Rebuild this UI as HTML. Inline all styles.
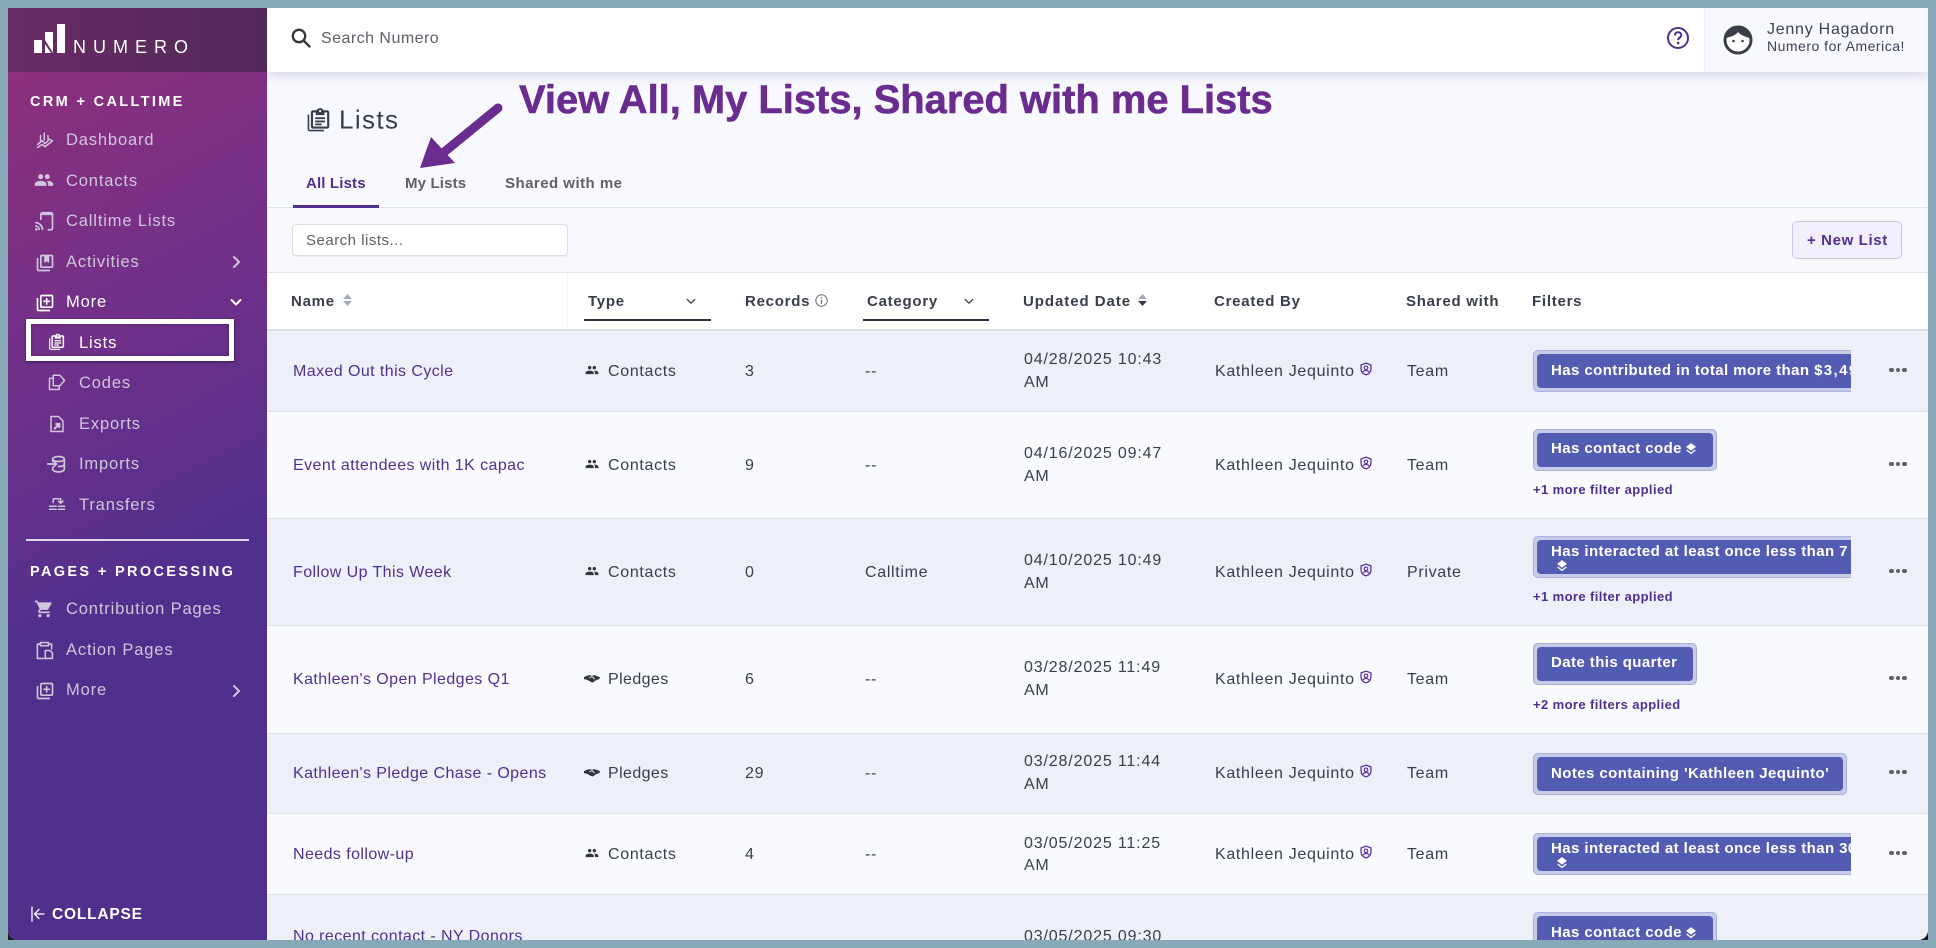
<!DOCTYPE html>
<html lang="en"><head><meta charset="utf-8"><title>Numero Lists</title>
<style>
*{box-sizing:border-box;margin:0;padding:0}
html,body{width:1936px;height:948px;overflow:hidden;background:#87a9b8;font-family:"Liberation Sans",sans-serif}
#cl,#cr{position:absolute;top:928px;width:12px;height:12px;background:#1a1a1a}
#cl{left:8px}#cr{left:1916px}
#app{position:absolute;left:8px;top:8px;width:1920px;height:932px;overflow:hidden;background:#f8f9fe;border-radius:0 0 10px 10px}
.a{position:absolute;white-space:nowrap}
.t{position:absolute;white-space:nowrap;line-height:20px;height:20px;margin-top:1.5px}
svg{position:absolute;display:block}
#side{position:absolute;left:0;top:0;width:259px;height:932px;background:linear-gradient(152deg,#94307a 0,#70308a 35%,#50308d 62%,#50308d 100%)}
#logo{position:absolute;left:0;top:0;width:259px;height:64px;background:linear-gradient(90deg,#682c63,#53295a)}
.n{font-size:16.5px;letter-spacing:.85px;color:#cfc6dc;margin-top:1px}
.sec{font-size:14.5px;font-weight:bold;letter-spacing:2.35px;color:#fff;margin-top:1px}
.ic{color:#cfc6dc;fill:currentColor}
.st{fill:none;stroke:currentColor;stroke-width:2;stroke-linecap:round;stroke-linejoin:round}
.row{position:absolute;left:259px;width:1661px}
.o{background:#edf0f8;border-bottom:1px solid #dfe3ec}
.e{background:#f9fafe;border-bottom:1px solid #dfe3ec}
.th{font-size:15px;font-weight:bold;letter-spacing:.75px;color:#3a3d4b}
.td{font-size:16px;letter-spacing:.68px;color:#3a3d4b}
.dt{letter-spacing:.85px}
.pl{letter-spacing:.4px}
.lk{font-size:16px;letter-spacing:.42px;color:#50308d}
.clip{position:absolute;left:1525px;overflow:hidden;height:42px}
.chip{position:absolute;left:0;top:0;height:42px;background:#c8cce8;border:1px solid #a9aedd;border-radius:5px}
.chip i{position:absolute;left:3px;top:3px;bottom:3px;right:3px;background:#535cb2;border-radius:4px}
.cht{position:absolute;white-space:nowrap;left:18px;line-height:18px;font-size:15px;font-weight:bold;letter-spacing:.42px;color:#fff;margin-top:1.5px}
.more{font-size:13px;font-weight:bold;letter-spacing:.4px;color:#50308d}
.dots{position:absolute;left:1881px;width:18px;height:4px}
.dots b{position:absolute;top:-.5px;width:4.5px;height:4.5px;border-radius:50%;background:#5f6068}
.dots b:nth-child(1){left:0}.dots b:nth-child(2){left:6.5px}.dots b:nth-child(3){left:13px}
</style></head><body>
<div id="cl"></div><div id="cr"></div>
<svg width="0" height="0" style="position:absolute"><defs>
<symbol id="people" viewBox="0 0 24 24"><path d="M16 11c1.66 0 2.99-1.34 2.99-3S17.66 5 16 5c-1.66 0-3 1.34-3 3s1.34 3 3 3zm-8 0c1.66 0 2.99-1.34 2.99-3S9.66 5 8 5C6.34 5 5 6.34 5 8s1.34 3 3 3zm0 2c-2.33 0-7 1.17-7 3.5V19h14v-2.5c0-2.33-4.67-3.5-7-3.5zm8 0c-.29 0-.62.02-.97.05 1.16.84 1.97 1.97 1.97 3.45V19h6v-2.5c0-2.33-4.67-3.5-7-3.5z"/></symbol>
<symbol id="libadd" viewBox="0 0 24 24"><path d="M4 6H2v14c0 1.1.9 2 2 2h14v-2H4V6zm16-4H8c-1.1 0-2 .9-2 2v12c0 1.1.9 2 2 2h12c1.1 0 2-.9 2-2V4c0-1.1-.9-2-2-2zm0 14H8V4h12v12zm-7-2h2v-3h3V9h-3V6h-2v3h-3v2h3z"/></symbol>
<symbol id="libbook" viewBox="0 0 24 24"><path d="M4 6H2v14c0 1.1.9 2 2 2h14v-2H4V6zm16-4H8c-1.1 0-2 .9-2 2v12c0 1.1.9 2 2 2h12c1.1 0 2-.9 2-2V4c0-1.1-.9-2-2-2zm0 14H8V4h3v8l3-2 3 2V4h3v12z"/></symbol>
<symbol id="lists" viewBox="0 0 24 24"><path d="M3 7H1.5v13.5c0 1.1.9 2 2 2h13V21H3V7z"/><path fill-rule="evenodd" d="M19.5 3H16c-.4-1.2-1.6-2-3-2s-2.600.8-3 2H6.500c-1.100 0-2 .9-2 2v13c0 1.100.9 2 2 2h13c1.100 0 2-.9 2-2V5c0-1.100-.9-2-2-2zM13 2.800a1 1 0 1 1 0 2 1 1 0 0 1 0-2zM19.500 18h-13V5H9v2.500h8V5h2.500v13z"/><path d="M8.500 9.500h9v1.700h-9zM8.500 12.500h9v1.700h-9zM8.500 15.200h6v1.600h-6z"/></symbol>
<symbol id="hands" viewBox="0 0 24 16"><path d="M0 6l4-2 4-1 4 1 3-1 4 1 5 2-1 3-4 1-6 4-3-1-5-3-5-1z"/><path d="M8 7l4-2 4 4" fill="none" stroke="#fff" stroke-width="1.300"/></symbol>
<symbol id="shield" viewBox="0 0 24 24"><path fill="none" stroke="#5a2f9e" stroke-width="2.200" d="M12 2l8.500 3v7c0 5-3.600 8.600-8.500 10-4.900-1.400-8.500-5-8.500-10V5z"/><circle cx="12" cy="10" r="3" fill="none" stroke="#5a2f9e" stroke-width="2"/><path fill="none" stroke="#5a2f9e" stroke-width="2" d="M6.500 17.500c1.500-2 3.500-3 5.500-3s4 1 5.500 3"/></symbol>
<symbol id="layers" viewBox="0 0 12 14"><path fill="#fff" d="M6 0l6 4.500L6 9 0 4.500z"/><path fill="none" stroke="#fff" stroke-width="1.500" d="M.8 8.200L6 12.300l5.200-4.100"/></symbol>
</defs></svg>
<div id="app">
<div id="side">
<div id="logo">
<svg style="left:0;top:0" width="100" height="64" viewBox="0 0 100 64"><g fill="#fff"><rect x="26" y="32" width="8" height="13"/><path d="M37 24H45V45L37 32Z"/><path d="M37 36L43 45H37Z"/><rect x="49" y="16" width="8" height="29"/></g></svg>
<div class="t" style="left:65px;top:27px;font-size:18px;letter-spacing:7px;color:#fff">NUMERO</div>
</div>
<div class="t sec" style="left:22px;top:83px">CRM + CALLTIME</div>
<div class="t n" style="left:58px;top:121px">Dashboard</div>
<svg class="st" style="left:28px;top:123px;color:#cfc6dc" width="18" height="18" viewBox="0 0 24 24"><path d="M6 6v7M11 3v9M16 6v5M2 18l6-5 4 4 6-6 4 2M2 22l6-4 4 3 9-7"/></svg>
<div class="t n" style="left:58px;top:162px">Contacts</div>
<svg class="ic" style="left:26px;top:162px" width="20" height="20"><use href="#people"/></svg>
<div class="t n" style="left:58px;top:202px">Calltime Lists</div>
<svg class="st" style="left:27px;top:203px;color:#cfc6dc" width="20" height="20" viewBox="0 0 24 24"><path d="M7 10V4c0-1 .7-2 2-2h10c1.300 0 2 1 2 2v17c0 .8-.7 1.500-2 1.500h-3"/><path d="M9 4h12" /><path d="M1 14c4 0 8 4 8 8M1 18c2 0 4 2 4 4" /><circle cx="1.500" cy="22" r=".6"/></svg>
<div class="t n" style="left:58px;top:243px">Activities</div>
<svg class="ic" style="left:27px;top:245px" width="20" height="20"><use href="#libbook"/></svg>
<svg class="st" style="left:224px;top:248px;color:#cfc6dc" width="10" height="12" viewBox="0 0 10 12"><path d="M2 1l5 5-5 5"/></svg>
<div class="t n" style="left:58px;top:283px;color:#fff">More</div>
<svg style="left:27px;top:285px;fill:#fff" width="20" height="20"><use href="#libadd"/></svg>
<svg class="st" style="left:222px;top:290px;color:#fff" width="12" height="10" viewBox="0 0 12 10"><path d="M1.500 2l4.500 4.500L10.500 2"/></svg>

<div class="a" style="left:18px;top:311px;width:208px;height:42px;border:5px solid #fff;box-shadow:0 1px 3px rgba(0,0,0,.45),inset 0 0 3px rgba(0,0,0,.35)"></div>
<div class="t n" style="left:71px;top:324px;color:#fff">Lists</div>
<svg style="left:40px;top:325px;fill:#fff" width="18" height="18"><use href="#lists"/></svg>
<div class="t n" style="left:71px;top:364px">Codes</div>
<svg class="st" style="left:40px;top:365px;color:#cfc6dc" width="18" height="18" viewBox="0 0 24 24"><path d="M7 3h9l6 7-6 7H7z"/><path d="M7 7H2v15h13v-5"/></svg>
<div class="t n" style="left:71px;top:405px">Exports</div>
<svg class="st" style="left:41px;top:407px;color:#cfc6dc" width="16" height="18" viewBox="0 0 20 24"><path d="M2 2h10l6 6v14H2z"/><path stroke-width="3" d="M7 18l6-6M9 12h4v4"/></svg>
<div class="t n" style="left:71px;top:445px">Imports</div>
<svg class="st" style="left:38px;top:446px;color:#cfc6dc" width="20" height="20" viewBox="0 0 24 24"><ellipse cx="15" cy="6" rx="7" ry="3"/><path d="M8 6v3M22 6v12c0 2-3 3.500-7 3.500S8 20 8 18v-2M22 12c0 2-3 3-7 3M2 12h10M9 8.500l3.500 3.500L9 15.500"/></svg>
<div class="t n" style="left:71px;top:486px">Transfers</div>
<svg class="st" style="left:40px;top:487px;color:#cfc6dc" width="18" height="18" viewBox="0 0 24 24"><path d="M2 15h9M2 19h9M14 15h8M14 19h8M7 10V5h10v5M14 8l3 3 3-3"/></svg>

<div class="a" style="left:18px;top:531px;width:223px;height:2px;background:#ddd8e6"></div>
<div class="t sec" style="left:22px;top:553px">PAGES + PROCESSING</div>
<div class="t n" style="left:58px;top:590px">Contribution Pages</div>
<svg style="left:26px;top:591px;fill:#cfc6dc" width="20" height="20" viewBox="0 0 24 24"><path d="M7 18c-1.100 0-1.990.9-1.990 2S5.900 22 7 22s2-.9 2-2-.9-2-2-2zM1 2v2h2l3.600 7.590-1.350 2.450c-.16.28-.25.61-.25.96 0 1.100.9 2 2 2h12v-2H7.420c-.14 0-.25-.11-.25-.25l.03-.12.9-1.630h7.450c.75 0 1.410-.41 1.750-1.030l3.580-6.490c.08-.14.12-.31.12-.48 0-.55-.45-1-1-1H5.210l-.94-2H1zm16 16c-1.100 0-1.990.9-1.990 2s.89 2 1.990 2 2-.9 2-2-.9-2-2-2z"/></svg>
<div class="t n" style="left:58px;top:631px">Action Pages</div>
<svg class="st" style="left:27px;top:633px;color:#cfc6dc" width="19" height="19" viewBox="0 0 24 24"><path d="M7 4H3v18h8M17 4h4v6M7 2h10v4H7z"/><path d="M13 12h6l3 3v7h-9z"/></svg>
<div class="t n" style="left:58px;top:671px">More</div>
<svg class="ic" style="left:27px;top:673px" width="20" height="20"><use href="#libadd"/></svg>
<svg class="st" style="left:224px;top:677px;color:#cfc6dc" width="10" height="12" viewBox="0 0 10 12"><path d="M2 1l5 5-5 5"/></svg>
<svg class="st" style="left:23px;top:898px;color:#fff;stroke-width:1.300" width="14" height="16" viewBox="0 0 14 16"><path d="M1 1v14M13 8H4M8 3.500L3.500 8 8 12.500"/></svg>
<div class="t" style="left:44px;top:895px;font-size:15.500px;font-weight:bold;letter-spacing:.8px;color:#fff">COLLAPSE</div>
</div>

<!-- top bar -->
<div class="a" style="left:259px;top:0;width:1661px;height:64px;background:#fff;box-shadow:0 2px 12px rgba(60,60,90,.22);z-index:3">
<svg style="left:24px;top:20px;fill:none;stroke:#33353f;stroke-width:2.300;stroke-linecap:round" width="20" height="20" viewBox="0 0 20 20"><circle cx="8" cy="8" r="6.200"/><path d="M12.500 12.500L18.500 18.500"/></svg>
<div class="t" style="left:54px;top:19px;font-size:16px;letter-spacing:.47px;color:#5f6169">Search Numero</div>
<svg style="left:1399px;top:18px" width="24" height="24" viewBox="0 0 24 24"><circle cx="12" cy="12" r="10" fill="none" stroke="#50308d" stroke-width="2"/><path d="M8.800 9.500c0-2 1.500-3.200 3.300-3.200 1.900 0 3.200 1.200 3.200 2.800 0 2.400-3.200 2.500-3.200 5" fill="none" stroke="#50308d" stroke-width="2"/><circle cx="12.100" cy="17" r="1.300" fill="#50308d"/></svg>
<div class="a" style="left:1437px;top:0;width:224px;height:64px;background:#f8f9fe;border-left:1px solid #eceef5"></div>
<svg style="left:1456px;top:17px" width="30" height="30" viewBox="0 0 30 30"><circle cx="15" cy="15" r="13" fill="#fff" stroke="#3d3f48" stroke-width="3"/><path d="M3 13C3 6 9 1 15 1s12 5 12 12c-4-1-9-2.500-12-6-2 3.500-8 5-12 6z" fill="#3d3f48"/><circle cx="10.500" cy="16" r="1.300" fill="#3d3f48"/><circle cx="19.500" cy="16" r="1.300" fill="#3d3f48"/></svg>
<div class="t" style="left:1500px;top:10px;font-size:16px;letter-spacing:.75px;color:#3f414c">Jenny Hagadorn</div>
<div class="t" style="left:1500px;top:26px;font-size:14px;letter-spacing:.5px;color:#3f414c">Numero for America!</div>
</div>

<!-- page head -->
<svg style="left:298px;top:99px;fill:#3a3d4b" width="26" height="26"><use href="#lists"/></svg>
<div class="t" style="left:331px;top:102px;height:30px;line-height:30px;font-size:26px;letter-spacing:1.4px;color:#3a3d4b;transform:translateY(-7.5px)">Lists</div>
<div class="t" style="left:511px;top:65px;height:50px;line-height:50px;font-size:39.9px;font-weight:bold;letter-spacing:0;color:#6a2c8e;-webkit-text-stroke:.6px #6a2c8e">View All, My Lists, Shared with me Lists</div>
<svg style="left:405px;top:90px" width="100" height="84" viewBox="0 0 100 84"><path d="M85 10L30 55" stroke="#6a2c8e" stroke-width="9" stroke-linecap="round" fill="none"/><path d="M7 70L18 39l24 26z" fill="#6a2c8e"/></svg>

<div class="t" style="left:298px;top:164px;font-size:15px;font-weight:bold;letter-spacing:.15px;color:#50308d">All Lists</div>
<div class="t" style="left:397px;top:164px;font-size:15px;font-weight:bold;letter-spacing:.15px;color:#5f6068">My Lists</div>
<div class="t" style="left:497px;top:164px;font-size:15px;font-weight:bold;letter-spacing:.47px;color:#5f6068">Shared with me</div>
<div class="a" style="left:259px;top:199px;width:1661px;height:1px;background:#dfe3ec"></div>
<div class="a" style="left:285px;top:197px;width:86px;height:3px;background:#50308d"></div>
<div class="a" style="left:284px;top:216px;width:276px;height:32px;background:#fff;border:1px solid #dcdfe8;border-radius:4px;box-shadow:0 1px 1px rgba(60,60,90,.08)"></div>
<div class="t" style="left:298px;top:221px;font-size:15px;letter-spacing:.5px;color:#5f6169">Search lists...</div>
<div class="a" style="left:1784px;top:213px;width:110px;height:38px;background:#f1effb;border:1px solid #cdc4e8;border-radius:5px"></div>
<div class="t" style="left:1799px;top:221px;font-size:15px;font-weight:bold;letter-spacing:.62px;color:#50308d">+ New List</div>

<!-- table header -->
<div class="a" style="left:259px;top:264px;width:1661px;height:59px;background:#fff;border-top:1px solid #dfe3ec;border-bottom:2px solid #dcdfe6"></div>
<div class="a" style="left:559px;top:265px;width:1px;height:56px;background:#f4f5f9"></div>
<div class="t th" style="left:283px;top:282px">Name</div>
<svg style="left:334px;top:285px" width="11" height="14" viewBox="0 0 11 14"><path d="M5.500 1L10 6H1z M5.500 13L10 8H1z" fill="#a5a9c0"/></svg>
<div class="t th" style="left:580px;top:282px">Type</div>
<svg class="st" style="left:678px;top:290px;color:#3a3d4b;stroke-width:1.500" width="10" height="7" viewBox="0 0 12 8"><path d="M1.500 1.500L6 6l4.500-4.500"/></svg>
<div class="a" style="left:576px;top:311px;width:127px;height:2px;background:#2e3040"></div>
<div class="t th" style="left:737px;top:282px">Records</div>
<svg style="left:807px;top:286px" width="13" height="13" viewBox="0 0 13 13"><circle cx="6.500" cy="6.500" r="5.700" fill="none" stroke="#6c6e78" stroke-width="1"/><rect x="5.900" y="5.500" width="1.200" height="4.500" fill="#6c6e78"/><rect x="5.900" y="3" width="1.200" height="1.300" fill="#6c6e78"/></svg>
<div class="t th" style="left:859px;top:282px">Category</div>
<svg class="st" style="left:956px;top:290px;color:#3a3d4b;stroke-width:1.500" width="10" height="7" viewBox="0 0 12 8"><path d="M1.500 1.500L6 6l4.500-4.500"/></svg>
<div class="a" style="left:855px;top:311px;width:126px;height:2px;background:#2e3040"></div>
<div class="t th" style="left:1015px;top:282px;letter-spacing:.95px">Updated Date</div>
<svg style="left:1129px;top:285px" width="11" height="14" viewBox="0 0 11 14"><path d="M5.500 1L10 6H1z" fill="#a5a9c0"/><path d="M5.500 13L10 8H1z" fill="#3a3d4b"/></svg>
<div class="t th" style="left:1206px;top:282px">Created By</div>
<div class="t th" style="left:1398px;top:282px">Shared with</div>
<div class="t th" style="left:1524px;top:282px">Filters</div>

<!-- rows -->
<div class="row o" style="top:323px;height:81px"></div>
<div class="row e" style="top:404px;height:107px"></div>
<div class="row o" style="top:511px;height:107px"></div>
<div class="row e" style="top:618px;height:108px"></div>
<div class="row o" style="top:726px;height:80px"></div>
<div class="row e" style="top:806px;height:81px"></div>
<div class="row o" style="top:887px;height:46px"></div>

<!-- row 1 -->
<div class="t lk" style="left:285px;top:352px">Maxed Out this Cycle</div>
<svg style="left:577px;top:355px;fill:#33353f" width="14" height="14"><use href="#people"/></svg>
<div class="t td" style="left:600px;top:352px">Contacts</div>
<div class="t td" style="left:737px;top:352px">3</div>
<div class="t td" style="left:857px;top:352px">--</div>
<div class="t td dt" style="left:1016px;top:340px">04/28/2025 10:43</div>
<div class="t td" style="left:1016px;top:363px">AM</div>
<div class="t td" style="left:1207px;top:352px">Kathleen Jequinto</div>
<svg style="left:1351px;top:354px" width="14" height="14"><use href="#shield"/></svg>
<div class="t td" style="left:1399px;top:352px">Team</div>
<div class="clip" style="top:342px;width:318px"><div class="chip" style="width:340px"><i></i></div><div class="cht" style="top:10px">Has contributed in total more than <span style="letter-spacing:1.4px">$3,499</span></div></div>
<div class="dots" style="top:360px"><b></b><b></b><b></b></div>

<!-- row 2 -->
<div class="t lk" style="left:285px;top:446px">Event attendees with 1K capac</div>
<svg style="left:577px;top:449px;fill:#33353f" width="14" height="14"><use href="#people"/></svg>
<div class="t td" style="left:600px;top:446px">Contacts</div>
<div class="t td" style="left:737px;top:446px">9</div>
<div class="t td" style="left:857px;top:446px">--</div>
<div class="t td dt" style="left:1016px;top:434px">04/16/2025 09:47</div>
<div class="t td" style="left:1016px;top:457px">AM</div>
<div class="t td" style="left:1207px;top:446px">Kathleen Jequinto</div>
<svg style="left:1351px;top:448px" width="14" height="14"><use href="#shield"/></svg>
<div class="t td" style="left:1399px;top:446px">Team</div>
<div class="clip" style="top:421px;width:185px"><div class="chip" style="width:184px"><i></i></div><div class="cht" style="top:9px">Has contact code</div><svg style="left:153px;top:14px" width="10" height="12"><use href="#layers"/></svg></div>
<div class="t more" style="left:1525px;top:470px">+1 more filter applied</div>
<div class="dots" style="top:454px"><b></b><b></b><b></b></div>

<!-- row 3 -->
<div class="t lk" style="left:285px;top:553px">Follow Up This Week</div>
<svg style="left:577px;top:556px;fill:#33353f" width="14" height="14"><use href="#people"/></svg>
<div class="t td" style="left:600px;top:553px">Contacts</div>
<div class="t td" style="left:737px;top:553px">0</div>
<div class="t td" style="left:857px;top:553px">Calltime</div>
<div class="t td dt" style="left:1016px;top:541px">04/10/2025 10:49</div>
<div class="t td" style="left:1016px;top:564px">AM</div>
<div class="t td" style="left:1207px;top:553px">Kathleen Jequinto</div>
<svg style="left:1351px;top:555px" width="14" height="14"><use href="#shield"/></svg>
<div class="t td" style="left:1399px;top:553px">Private</div>
<div class="clip" style="top:528px;width:318px"><div class="chip" style="width:340px"><i></i></div><div class="cht" style="top:5px">Has interacted at least once less than 7 days</div><svg style="left:24px;top:24px" width="10" height="12"><use href="#layers"/></svg></div>
<div class="t more" style="left:1525px;top:577px">+1 more filter applied</div>
<div class="dots" style="top:561px"><b></b><b></b><b></b></div>

<!-- row 4 -->
<div class="t lk" style="left:285px;top:660px">Kathleen's Open Pledges Q1</div>
<svg style="left:576px;top:665px;fill:#33353f" width="16" height="11"><use href="#hands"/></svg>
<div class="t td pl" style="left:600px;top:660px">Pledges</div>
<div class="t td" style="left:737px;top:660px">6</div>
<div class="t td" style="left:857px;top:660px">--</div>
<div class="t td dt" style="left:1016px;top:648px">03/28/2025 11:49</div>
<div class="t td" style="left:1016px;top:671px">AM</div>
<div class="t td" style="left:1207px;top:660px">Kathleen Jequinto</div>
<svg style="left:1351px;top:662px" width="14" height="14"><use href="#shield"/></svg>
<div class="t td" style="left:1399px;top:660px">Team</div>
<div class="clip" style="top:635px;width:165px"><div class="chip" style="width:164px"><i></i></div><div class="cht" style="top:9px">Date this quarter</div></div>
<div class="t more" style="left:1525px;top:685px">+2 more filters applied</div>
<div class="dots" style="top:668px"><b></b><b></b><b></b></div>

<!-- row 5 -->
<div class="t lk" style="left:285px;top:754px">Kathleen's Pledge Chase - Opens</div>
<svg style="left:576px;top:759px;fill:#33353f" width="16" height="11"><use href="#hands"/></svg>
<div class="t td pl" style="left:600px;top:754px">Pledges</div>
<div class="t td" style="left:737px;top:754px">29</div>
<div class="t td" style="left:857px;top:754px">--</div>
<div class="t td dt" style="left:1016px;top:742px">03/28/2025 11:44</div>
<div class="t td" style="left:1016px;top:765px">AM</div>
<div class="t td" style="left:1207px;top:754px">Kathleen Jequinto</div>
<svg style="left:1351px;top:756px" width="14" height="14"><use href="#shield"/></svg>
<div class="t td" style="left:1399px;top:754px">Team</div>
<div class="clip" style="top:745px;width:318px"><div class="chip" style="width:314px"><i></i></div><div class="cht" style="top:10px">Notes containing 'Kathleen Jequinto'</div></div>
<div class="dots" style="top:762px"><b></b><b></b><b></b></div>

<!-- row 6 -->
<div class="t lk" style="left:285px;top:835px">Needs follow-up</div>
<svg style="left:577px;top:838px;fill:#33353f" width="14" height="14"><use href="#people"/></svg>
<div class="t td" style="left:600px;top:835px">Contacts</div>
<div class="t td" style="left:737px;top:835px">4</div>
<div class="t td" style="left:857px;top:835px">--</div>
<div class="t td dt" style="left:1016px;top:824px">03/05/2025 11:25</div>
<div class="t td" style="left:1016px;top:846px">AM</div>
<div class="t td" style="left:1207px;top:835px">Kathleen Jequinto</div>
<svg style="left:1351px;top:837px" width="14" height="14"><use href="#shield"/></svg>
<div class="t td" style="left:1399px;top:835px">Team</div>
<div class="clip" style="top:825px;width:318px"><div class="chip" style="width:340px"><i></i></div><div class="cht" style="top:5px">Has interacted at least once less than 30 days</div><svg style="left:24px;top:24px" width="10" height="12"><use href="#layers"/></svg></div>
<div class="dots" style="top:843px"><b></b><b></b><b></b></div>

<!-- row 7 -->
<div class="t lk" style="left:285px;top:917px">No recent contact - NY Donors</div>
<div class="t td dt" style="left:1016px;top:917px">03/05/2025 09:30</div>
<div class="clip" style="top:904px;width:185px"><div class="chip" style="width:184px"><i></i></div><div class="cht" style="top:10px">Has contact code</div><svg style="left:153px;top:15px" width="10" height="12"><use href="#layers"/></svg></div>
</div>
</body></html>
